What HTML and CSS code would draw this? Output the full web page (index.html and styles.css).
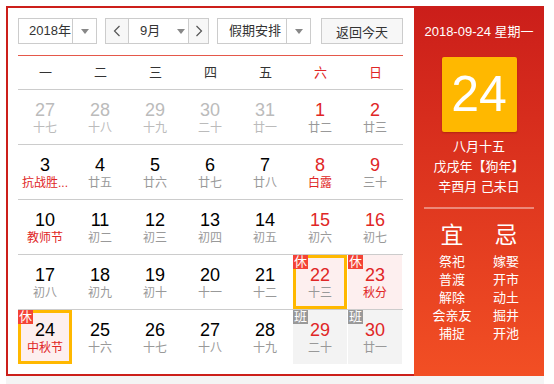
FILE: index.html
```html
<!DOCTYPE html>
<html lang="zh-CN">
<head>
    <meta charset="UTF-8">
    <title>万年历</title>
    <link rel="stylesheet" href="styles.css">
</head>
<body>

<div class="calendar">
    <div class="main">
        <div class="toolbar">
            <div class="select year-select">
                <span class="select-text">2018年</span>
                <span class="select-arrow"><i class="caret"></i></span>
            </div>

            <div class="month-group">
                <span class="nav-btn">
                    <svg width="8" height="12" viewBox="0 0 8 12"><path d="M6.5 1 L1.5 6 L6.5 11" fill="none" stroke="#555" stroke-width="1.2"/></svg>
                </span>
                <span class="month-select">
                    <span class="select-text">9月</span>
                    <i class="caret"></i>
                </span>
                <span class="nav-btn nav-next">
                    <svg width="8" height="12" viewBox="0 0 8 12"><path d="M1.5 1 L6.5 6 L1.5 11" fill="none" stroke="#555" stroke-width="1.2"/></svg>
                </span>
            </div>

            <div class="select holiday-select">
                <span class="select-text">假期安排</span>
                <span class="select-arrow"><i class="caret"></i></span>
            </div>

            <button class="today-btn">返回今天</button>
        </div>

        <div class="weekdays">
            <span>一</span><span>二</span><span>三</span><span>四</span><span>五</span>
            <span class="weekend">六</span><span class="weekend">日</span>
        </div>

        <div class="week">
            <div class="day other"><b>27</b><em>十七</em></div>
            <div class="day other"><b>28</b><em>十八</em></div>
            <div class="day other"><b>29</b><em>十九</em></div>
            <div class="day other"><b>30</b><em>二十</em></div>
            <div class="day other"><b>31</b><em>廿一</em></div>
            <div class="day weekend"><b>1</b><em>廿二</em></div>
            <div class="day weekend"><b>2</b><em>廿三</em></div>
        </div>

        <div class="week">
            <div class="day"><b>3</b><em class="fest">抗战胜...</em></div>
            <div class="day"><b>4</b><em>廿五</em></div>
            <div class="day"><b>5</b><em>廿六</em></div>
            <div class="day"><b>6</b><em>廿七</em></div>
            <div class="day"><b>7</b><em>廿八</em></div>
            <div class="day weekend"><b>8</b><em class="fest">白露</em></div>
            <div class="day weekend"><b>9</b><em>三十</em></div>
        </div>

        <div class="week">
            <div class="day"><b>10</b><em class="fest">教师节</em></div>
            <div class="day"><b>11</b><em>初二</em></div>
            <div class="day"><b>12</b><em>初三</em></div>
            <div class="day"><b>13</b><em>初四</em></div>
            <div class="day"><b>14</b><em>初五</em></div>
            <div class="day weekend"><b>15</b><em>初六</em></div>
            <div class="day weekend"><b>16</b><em>初七</em></div>
        </div>

        <div class="week">
            <div class="day"><b>17</b><em>初八</em></div>
            <div class="day"><b>18</b><em>初九</em></div>
            <div class="day"><b>19</b><em>初十</em></div>
            <div class="day"><b>20</b><em>十一</em></div>
            <div class="day"><b>21</b><em>十二</em></div>
            <div class="day weekend rest today"><span class="tag">休</span><b>22</b><em>十三</em></div>
            <div class="day weekend rest"><span class="tag">休</span><b>23</b><em class="fest">秋分</em></div>
        </div>

        <div class="week">
            <div class="day rest selected"><span class="tag">休</span><b>24</b><em class="fest">中秋节</em></div>
            <div class="day"><b>25</b><em>十六</em></div>
            <div class="day"><b>26</b><em>十七</em></div>
            <div class="day"><b>27</b><em>十八</em></div>
            <div class="day"><b>28</b><em>十九</em></div>
            <div class="day weekend work"><span class="tag">班</span><b>29</b><em>二十</em></div>
            <div class="day weekend work"><span class="tag">班</span><b>30</b><em>廿一</em></div>
        </div>
    </div>

    <div class="side">
        <div class="side-date">2018-09-24 星期一</div>
        <div class="big-day">24</div>
        <div class="lunar">
            <p>八月十五</p>
            <p>戊戌年【狗年】</p>
            <p>辛酉月 己未日</p>
        </div>
        <div class="divider"></div>
        <div class="almanac">
            <ul>
                <li class="almanac-title">宜</li>
                <li>祭祀</li>
                <li>普渡</li>
                <li>解除</li>
                <li>会亲友</li>
                <li>捕捉</li>
            </ul>
            <ul>
                <li class="almanac-title">忌</li>
                <li>嫁娶</li>
                <li>开市</li>
                <li>动土</li>
                <li>掘井</li>
                <li>开池</li>
            </ul>
        </div>
    </div>
</div>
<div class="under"></div>

</body>
</html>
```

FILE: styles.css
```css
* {
    box-sizing: border-box;
}

body {
    margin: 6px 0 0 6px;
    background: #fff;
    font-family: "Liberation Sans", "Noto Sans CJK SC", sans-serif;
    color: #333;
}

.calendar {
    display: flex;
    width: 538px;
    height: 370px;
}

.under {
    width: 538px;
    height: 8px;
    background: #f4f4f4;
}

/* Left part */
.main {
    width: 408px;
    height: 370px;
    border: 2px solid #cc1f1a;
    border-right: none;
    padding: 10px 11px 0 10px;
}

.toolbar {
    display: flex;
    height: 26px;
    font-size: 13px;
}

.select {
    display: flex;
    height: 26px;
    border: 1px solid #ccc;
    background: #fff;
}

.select-text {
    line-height: 24px;
    white-space: nowrap;
}

.select-arrow {
    width: 24px;
    border-left: 1px solid #ccc;
    display: flex;
    align-items: center;
    justify-content: center;
}

.caret {
    width: 0;
    height: 0;
    border-left: 4px solid transparent;
    border-right: 4px solid transparent;
    border-top: 5px solid #888;
}

.year-select {
    width: 79px;
}

.year-select .select-text {
    width: 54px;
    padding-left: 10px;
}

.month-group {
    display: flex;
    width: 104px;
    height: 26px;
    margin-left: 8px;
    border: 1px solid #ccc;
}

.nav-btn {
    width: 22px;
    background: #f7f7f7;
    display: flex;
    align-items: center;
    justify-content: center;
}

.nav-next {
    width: 20px;
    border-left: 1px solid #ccc;
}

.month-select {
    width: 60px;
    border-left: 1px solid #ccc;
    display: flex;
    align-items: center;
    padding-left: 11px;
}

.month-select .caret {
    margin-left: 17px;
}

.holiday-select {
    width: 94px;
    margin-left: 8px;
}

.holiday-select .select-text {
    width: 69px;
    padding-left: 11px;
}

.today-btn {
    width: 82px;
    height: 26px;
    margin-left: 10px;
    padding: 0;
    border: 1px solid #ccc;
    background: #f7f7f7;
    color: #333;
    font-family: inherit;
    font-size: 13px;
}

.weekdays {
    display: grid;
    grid-template-columns: repeat(7, 55px);
    margin-top: 11px;
    height: 35px;
    border-top: 1px solid #e5584a;
    border-bottom: 1px solid #ccc;
    font-size: 13px;
    line-height: 33px;
    text-align: center;
}

.weekdays .weekend {
    color: #e02626;
}

.week {
    display: grid;
    grid-template-columns: repeat(7, 55px);
    height: 55px;
    border-bottom: 1px solid #ccc;
}

.week:last-child {
    border-bottom: none;
}

.day {
    position: relative;
    height: 54px;
    margin-right: 1px;
    padding-top: 10px;
    text-align: center;
}

.day b {
    display: block;
    font-weight: normal;
    font-size: 18px;
    line-height: 20px;
    color: #000;
}

.day em {
    display: block;
    font-style: normal;
    font-size: 12px;
    line-height: 17px;
    color: #999;
    white-space: nowrap;
}

.day em.fest {
    color: #e02626;
}

.day.weekend b {
    color: #e02626;
}

.day.other b,
.day.other em {
    color: #bbb;
}

.day.rest {
    background: #fdefef;
}

.day.work {
    background: #f3f3f3;
}

.day.today,
.day.selected {
    box-shadow: inset 0 0 0 3px #ffb800;
}

.tag {
    position: absolute;
    top: 0;
    left: 0;
    width: 15px;
    height: 14px;
    background: #f44336;
    color: #fff;
    font-size: 13px;
    line-height: 14px;
    text-align: center;
}

.work .tag {
    background: #999;
}

/* Right panel */
.side {
    width: 130px;
    height: 370px;
    padding: 16px 10px 0;
    background: linear-gradient(#cb1e1a, #f24f24);
    color: #fff;
    text-align: center;
}

.side-date {
    font-size: 13px;
    line-height: 20px;
    white-space: nowrap;
}

.big-day {
    width: 75px;
    height: 75px;
    margin: 15px auto 0;
    background: #ffb800;
    border-radius: 2px;
    box-shadow: 0 1px 2px rgba(120, 20, 0, 0.4);
    font-size: 50px;
    line-height: 75px;
}

.lunar {
    margin-top: 5px;
}

.lunar p {
    margin: 0;
    font-size: 13px;
    line-height: 20px;
    white-space: nowrap;
}

.divider {
    height: 2px;
    margin-top: 10px;
    background: rgba(255, 255, 255, 0.4);
}

.almanac {
    display: flex;
    justify-content: center;
    margin-top: 11px;
}

.almanac ul {
    width: 54px;
    margin: 0;
    padding: 0;
    list-style: none;
}

.almanac li {
    font-size: 13px;
    line-height: 18px;
    white-space: nowrap;
}

.almanac .almanac-title {
    font-size: 23px;
    line-height: 30px;
    margin-bottom: 3px;
}
```
